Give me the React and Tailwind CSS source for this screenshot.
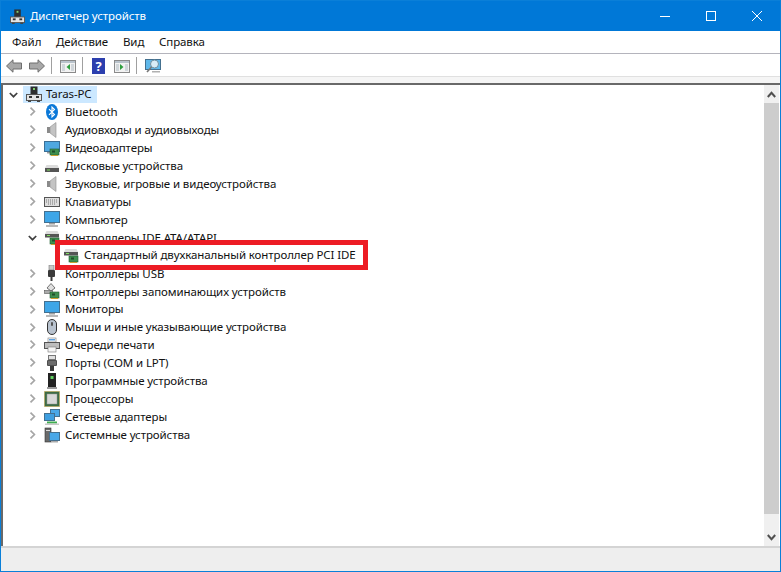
const Chevron = ({ open }) => (
  <svg width="9" height="9" viewBox="0 0 9 9" className="shrink-0">
    <path d={open ? "M0.8 3 L4.5 6.7 L8.2 3" : "M2.5 0.6 L6.4 4.5 L2.5 8.4"} fill="none" stroke={open ? "#404040" : "#a6a6a6"} strokeWidth="1.7" />
  </svg>
);

const Svg = ({ children }) => (
  <svg width="16" height="16" viewBox="0 0 16 16" className="shrink-0">
    {children}
  </svg>
);

const Card = () => (
  <>
    <rect x="6" y="9" width="9" height="6" fill="#3f8f4f" stroke="#1f5f2f" strokeWidth="0.6" />
    <rect x="8" y="10.5" width="3" height="2" fill="#1f4f2a" />
    <rect x="7" y="15" width="7" height="1" fill="#c8a030" />
  </>
);

const PcIcon = ({ size = 16 }) => (
  <svg width={size} height={size} viewBox="0 0 16 16" className="shrink-0">
    <rect x="4.5" y="0.5" width="7" height="8" fill="#2e2e2e" />
    <rect x="7" y="2" width="2" height="2" fill="#7fd06f" />
    <rect x="0.5" y="8.5" width="15" height="6" fill="#e4e4e4" stroke="#555" />
    <rect x="3" y="10" width="3" height="2" fill="#333" />
    <rect x="10" y="10" width="3" height="2" fill="#333" />
    <rect x="2" y="14.5" width="3" height="1.5" fill="#444" />
    <rect x="11" y="14.5" width="3" height="1.5" fill="#444" />
  </svg>
);

const Bluetooth = () => (
  <Svg>
    <ellipse cx="8" cy="8" rx="6" ry="8" fill="#0a78d8" />
    <path d="M5 5.2 L10.5 10.5 L8 13 V3 L10.5 5.5 L5 10.8" fill="none" stroke="#fff" strokeWidth="1.1" />
  </Svg>
);

const Speaker = () => (
  <Svg>
    <path d="M3 5 H6 V11 H3 Z" fill="#8a8a8a" />
    <path d="M6 5 L12 0.5 V15.5 L6 11 Z" fill="#c4c4c4" stroke="#8f8f8f" strokeWidth="0.6" />
  </Svg>
);

const Video = () => (
  <Svg>
    <rect x="0.5" y="1.5" width="15" height="10" fill="#4fa8e0" stroke="#3b6f96" />
    <rect x="3" y="12" width="5" height="1.5" fill="#9a9a9a" />
    <Card />
  </Svg>
);

const Disk = () => (
  <Svg>
    <path d="M2.5 7 H13.5 L15 10 H1 Z" fill="#dcdcdc" />
    <rect x="1" y="10" width="14" height="4" fill="#555" />
    <rect x="3" y="11.5" width="3" height="1" fill="#7fe05f" />
  </Svg>
);

const Keyboard = () => (
  <Svg>
    <rect x="0.5" y="3.5" width="15" height="9" fill="#dedede" stroke="#555" />
    <path d="M2 6 H14 M2 8 H14 M4 10 H12" stroke="#777" strokeWidth="1" strokeDasharray="1 1" />
  </Svg>
);

const Computer = () => (
  <Svg>
    <rect x="0.5" y="0.5" width="15" height="11" fill="#3ea6e8" stroke="#44708f" />
    <rect x="5" y="12" width="6" height="1.5" fill="#a0a0a0" />
    <rect x="2" y="14" width="12" height="2" fill="#b8b8b8" />
  </Svg>
);

const Ide = () => (
  <Svg>
    <path d="M2.5 2 H13.5 L15 5 H1 Z" fill="#dcdcdc" />
    <rect x="1" y="5" width="14" height="3.5" fill="#555" />
    <rect x="3" y="6" width="3" height="1" fill="#7fe05f" />
    <Card />
  </Svg>
);

const Usb = () => (
  <Svg>
    <rect x="5" y="0" width="5" height="5" fill="#c8c8c8" stroke="#777" strokeWidth="0.6" />
    <rect x="4" y="5" width="7" height="7" rx="1" fill="#3a3a3a" />
    <rect x="6.5" y="12" width="2" height="4" fill="#3a3a3a" />
  </Svg>
);

const Storage = () => (
  <Svg>
    <path d="M3 5 L7 0.5 L11 5 L7 8 Z" fill="#e0e0e0" stroke="#555" strokeWidth="0.8" />
    <rect x="0.5" y="7.5" width="8" height="3" fill="#aaa" stroke="#555" strokeWidth="0.6" />
    <Card />
  </Svg>
);

const Mouse = () => (
  <Svg>
    <rect x="3.5" y="0.5" width="9" height="15" rx="4.5" fill="#b9c3cf" stroke="#333" />
    <rect x="7" y="3" width="2" height="4" rx="1" fill="#555" />
  </Svg>
);

const Printer = () => (
  <Svg>
    <rect x="4" y="1" width="8" height="4" fill="#fff" stroke="#777" strokeWidth="0.6" />
    <rect x="5" y="2" width="6" height="1.5" fill="#5aa0e0" />
    <rect x="0.5" y="5.5" width="15" height="6" fill="#bdbdbd" stroke="#555" />
    <rect x="4" y="10" width="8" height="5" fill="#f4f4f4" stroke="#777" strokeWidth="0.6" />
  </Svg>
);

const Port = () => (
  <Svg>
    <rect x="4.5" y="0.5" width="7" height="4" fill="#e0e0e0" stroke="#777" />
    <rect x="3" y="5" width="10" height="6" rx="1" fill="#4f4f4f" />
    <path d="M4 7 H12 M4 9 H12" stroke="#999" strokeWidth="0.8" />
    <rect x="6" y="11" width="4" height="5" fill="#3a3a3a" />
  </Svg>
);

const Firmware = () => (
  <Svg>
    <rect x="4" y="0" width="8" height="14" fill="#222" />
    <rect x="6.5" y="3" width="3" height="3" fill="#5fd05f" />
    <rect x="3" y="14" width="10" height="2" fill="#999" />
  </Svg>
);

const Cpu = () => (
  <Svg>
    <rect x="0.5" y="0.5" width="15" height="15" fill="#3d6b45" stroke="#c0a040" strokeDasharray="1 1" />
    <rect x="3" y="3" width="10" height="10" fill="#d8d8d8" stroke="#999" strokeWidth="0.5" />
  </Svg>
);

const Network = () => (
  <Svg>
    <rect x="6.5" y="0.5" width="9" height="7" fill="#4aa8e8" stroke="#44708f" />
    <rect x="0.5" y="4.5" width="10" height="7" fill="#3f9fe0" stroke="#44708f" />
    <path d="M3 13.5 H13" stroke="#3fae4f" strokeWidth="2" />
    <rect x="1" y="14.5" width="14" height="1.5" fill="#c8c8c8" />
  </Svg>
);

const SystemDev = () => (
  <Svg>
    <rect x="1" y="1" width="6" height="14" fill="#6a6a6a" stroke="#333" strokeWidth="0.6" />
    <rect x="2" y="3" width="4" height="1" fill="#ddd" />
    <rect x="5.5" y="5.5" width="10" height="8" fill="#4aa8e8" stroke="#44708f" />
    <rect x="7" y="14" width="7" height="1.5" fill="#aaa" />
  </Svg>
);

const BarePage = ({ arrow }) => (
  <Svg>
    <rect x="0.5" y="2.5" width="15" height="12" fill="#f2f2f2" stroke="#8a8a8a" />
    <rect x="1" y="3" width="14" height="2" fill="#b9c3cc" />
    <rect x="2" y="6" width="3" height="7" fill="#d0d6da" />
    <rect x="11" y="6" width="3" height="7" fill="#d0d6da" />
    <path d={arrow} fill="#2f9e3f" />
  </Svg>
);

const Arrow = ({ flip }) => (
  <svg width="16" height="14" viewBox="0 0 16 14" className={flip ? "shrink-0 -scale-x-100" : "shrink-0"}>
    <path d="M0.5 7 L7 0.8 V4 H15.5 V10 H7 V13.2 Z" fill="#a8a8a8" stroke="#6e6e6e" />
  </svg>
);

const Sep = () => <div className="w-px h-[17px] bg-[#a0a0a0]" />;

const devices = [
  ["Bluetooth", Bluetooth],
  ["Аудиовходы и аудиовыходы", Speaker],
  ["Видеоадаптеры", Video],
  ["Дисковые устройства", Disk],
  ["Звуковые, игровые и видеоустройства", Speaker],
  ["Клавиатуры", Keyboard],
  ["Компьютер", Computer],
];

const devices2 = [
  ["Контроллеры USB", Usb],
  ["Контроллеры запоминающих устройств", Storage],
  ["Мониторы", Computer],
  ["Мыши и иные указывающие устройства", Mouse],
  ["Очереди печати", Printer],
  ["Порты (COM и LPT)", Port],
  ["Программные устройства", Firmware],
  ["Процессоры", Cpu],
  ["Сетевые адаптеры", Network],
  ["Системные устройства", SystemDev],
];

const Row = ({ label, Icon, open }) => (
  <div className="flex items-center h-[17.93px] pl-[24px]">
    <div className="w-[17px] flex justify-center pr-[6px]">
      <Chevron open={open} />
    </div>
    <Icon />
    <span className="ml-[5px] whitespace-nowrap">{label}</span>
  </div>
);

export default function App() {
  return (
    <div className="w-[781px] h-[572px] flex flex-col overflow-hidden bg-white border border-[#0a7fd8] text-[11.5px] tracking-[-0.1px] text-[#111] font-['Noto_Sans','Open_Sans',sans-serif] relative">
      <div className="h-[30px] shrink-0 bg-[#0078d7] flex items-center text-white">
        <div className="pl-[9px] pr-[5px]">
          <PcIcon size={15} />
        </div>
        <span>Диспетчер устройств</span>
        <div className="ml-auto flex h-full">
          <div className="w-[46px] flex items-center justify-center">
            <div className="w-[10px] h-px bg-white" />
          </div>
          <div className="w-[46px] flex items-center justify-center">
            <div className="w-[10px] h-[10px] border border-white" />
          </div>
          <div className="w-[46px] flex items-center justify-center">
            <svg width="10" height="10" viewBox="0 0 10 10">
              <path d="M0 0 L10 10 M10 0 L0 10" stroke="#fff" strokeWidth="1" />
            </svg>
          </div>
        </div>
      </div>

      <div className="h-[22px] shrink-0 flex items-center pl-[11px]">
        <span className="w-[44px]">Файл</span>
        <span className="w-[67px]">Действие</span>
        <span className="w-[36px]">Вид</span>
        <span>Справка</span>
      </div>
      <div className="h-px shrink-0 bg-[#b4b4bc]" />

      <div className="h-[22px] shrink-0 flex items-center pl-[5px] pt-[1px]">
        <Arrow />
        <div className="w-[7px]" />
        <Arrow flip />
        <div className="ml-[6px] mr-[8px]"><Sep /></div>
        <BarePage arrow="M10 6 V12 L6.5 9 Z" />
        <div className="ml-[6px] mr-[9px]"><Sep /></div>
        <div className="w-[13px] h-[16px] bg-[#2c3fae] text-white font-bold text-[13px] leading-[16px] text-center">?</div>
        <div className="w-[9px]" />
        <BarePage arrow="M6 6 V12 L9.5 9 Z" />
        <div className="ml-[6px] mr-[8px]"><Sep /></div>
        <svg width="16" height="16" viewBox="0 0 16 16" className="shrink-0">
          <rect x="0.5" y="1.5" width="15" height="10" fill="#5fb8ea" stroke="#44708f" />
          <circle cx="9.5" cy="6" r="4" fill="#d8ecf6" stroke="#6f8f9f" />
          <path d="M6.5 9 L2 14" stroke="#777" strokeWidth="1.6" />
          <rect x="7" y="13" width="8" height="1.5" fill="#b0b0b0" />
        </svg>
      </div>

      <div className="h-[7px] shrink-0 bg-[#f5f5f5] border-t border-[#e0e0e0]" />

      <div className="flex-1 min-h-0 flex border-t-2 border-l-2 border-[#696969] relative">
        <div className="flex-1">
          <div className="flex items-center h-[18px]">
            <div className="w-[20px] flex justify-center">
              <Chevron open />
            </div>
            <div className="flex items-center h-[17px] w-[74px] bg-[#cce8ff] pl-[3px]">
              <PcIcon />
              <span className="ml-[4px]">Taras-PC</span>
            </div>
          </div>
          {devices.map(([label, Icon]) => (
            <Row key={label} label={label} Icon={Icon} />
          ))}
          <Row label="Контроллеры IDE ATA/ATAPI" Icon={Ide} open />
          <div className="h-[17.93px]" />
          {devices2.map(([label, Icon]) => (
            <Row key={label} label={label} Icon={Icon} />
          ))}
        </div>
        <div className="w-[15px] shrink-0 flex flex-col bg-[#f0f0f0]">
          <div className="h-[18px] flex items-center justify-center">
            <svg width="9" height="7" viewBox="0 0 9 7">
              <path d="M0.8 6 L4.5 1.8 L8.2 6" fill="none" stroke="#505050" strokeWidth="2" />
            </svg>
          </div>
          <div className="h-[411px] bg-[#cdcdcd]" />
          <div className="flex-1 flex items-end justify-center pb-[5px]">
            <svg width="9" height="7" viewBox="0 0 9 7">
              <path d="M0.8 1 L4.5 5.2 L8.2 1" fill="none" stroke="#505050" strokeWidth="2" />
            </svg>
          </div>
        </div>
        <div className="w-[1px] shrink-0" />
      </div>

      <div className="h-[25px] shrink-0 bg-[#eeeeee] border-t-2 border-[#d4d4d4]" />

      <div className="absolute left-[54px] top-[239px] w-[313px] h-[30px] border-[5px] border-[#ed1c24] bg-white flex items-center pl-[3px] pb-[1px]">
        <Ide />
        <span className="ml-[5px] whitespace-nowrap">Стандартный двухканальный контроллер PCI IDE</span>
      </div>
    </div>
  );
}
